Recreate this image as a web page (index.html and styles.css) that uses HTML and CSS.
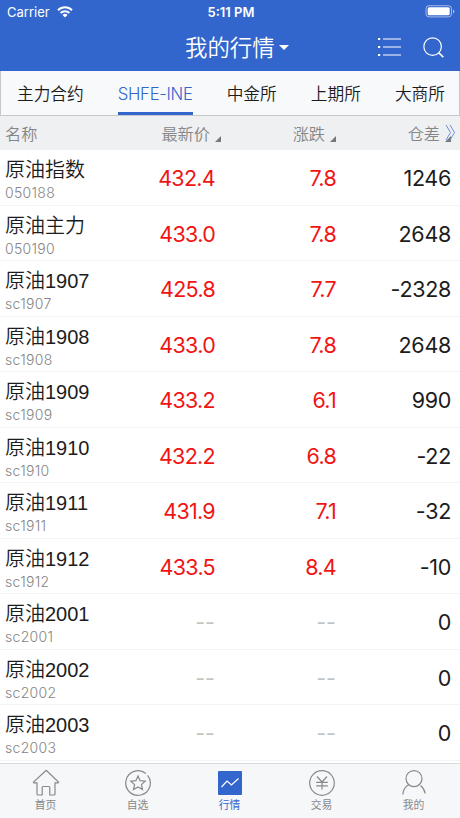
FILE: index.html
```html
<!DOCTYPE html>
<html lang="zh-CN">
<head>
    <meta charset="UTF-8">
    <meta name="viewport" content="width=device-width, initial-scale=1.0">
    <title>我的行情</title>
    <link rel="stylesheet" href="styles.css">
</head>
<body>
    <header class="header">
        <div class="status">
            <div class="carrier">
                <span>Carrier</span>
                <svg width="16" height="12" viewBox="0 0 16 12" fill="none" stroke="#fff" stroke-width="2">
                    <path d="M1 4.2a10 10 0 0 1 14 0M3.6 7a6.3 6.3 0 0 1 8.8 0"/>
                    <path d="M5.5 9a3.6 3.6 0 0 1 5 0L8 11.5z" fill="#fff" stroke="none"/>
                </svg>
            </div>
            <span class="time">5:11 PM</span>
            <svg class="battery" width="30" height="14" viewBox="0 0 30 14">
                <rect x="0" y=".7" width="25.5" height="11.2" rx="3" fill="none" stroke="#fff" stroke-opacity=".55"/>
                <rect x="1.7" y="2.3" width="22" height="8" rx="1.5" fill="#fff"/>
                <path d="M27 4.5v4q1.3-.7 1.3-2T27 4.5z" fill="#fff" fill-opacity=".6"/>
            </svg>
        </div>
        <div class="navbar">
            <h1 class="title">我的行情</h1>
            <div class="actions">
                <svg width="23" height="20" viewBox="0 0 23 20" stroke="#fff" stroke-width="1.2">
                    <path d="M5 2h18M5 10h18M5 18h18"/>
                    <path d="M0 2h2.2M0 10h2.2M0 18h2.2" stroke-width="2.2"/>
                </svg>
                <svg width="21" height="21" viewBox="0 0 21 21" fill="none" stroke="#fff" stroke-width="1.2">
                    <circle cx="9.6" cy="9.6" r="8.8"/>
                    <path d="M15.6 15.6l4.7 4.5" stroke-width="1.6"/>
                </svg>
            </div>
        </div>
    </header>

    <nav class="tabs">
        <a class="tab">主力合约</a>
        <a class="tab active">SHFE-INE</a>
        <a class="tab">中金所</a>
        <a class="tab">上期所</a>
        <a class="tab">大商所</a>
    </nav>

    <div class="columns">
        <span>名称</span>
        <span class="sort">最新价</span>
        <span class="sort">涨跌</span>
        <span class="sort">仓差</span>
        <svg class="more" width="11" height="17" viewBox="0 0 11 17" fill="none" stroke="#6c8dd9">
            <path d="M1 1l4.5 7.5L1 16M5 1l4.5 7.5L5 16"/>
        </svg>
    </div>

    <main class="list">
        <div class="row">
            <div class="name">原油指数<small>050188</small></div>
            <span class="up">432.4</span><span class="up">7.8</span><span>1246</span>
        </div>
        <div class="row">
            <div class="name">原油主力<small>050190</small></div>
            <span class="up">433.0</span><span class="up">7.8</span><span>2648</span>
        </div>
        <div class="row">
            <div class="name">原油1907<small>sc1907</small></div>
            <span class="up">425.8</span><span class="up">7.7</span><span>-2328</span>
        </div>
        <div class="row">
            <div class="name">原油1908<small>sc1908</small></div>
            <span class="up">433.0</span><span class="up">7.8</span><span>2648</span>
        </div>
        <div class="row">
            <div class="name">原油1909<small>sc1909</small></div>
            <span class="up">433.2</span><span class="up">6.1</span><span>990</span>
        </div>
        <div class="row">
            <div class="name">原油1910<small>sc1910</small></div>
            <span class="up">432.2</span><span class="up">6.8</span><span>-22</span>
        </div>
        <div class="row">
            <div class="name">原油1911<small>sc1911</small></div>
            <span class="up">431.9</span><span class="up">7.1</span><span>-32</span>
        </div>
        <div class="row">
            <div class="name">原油1912<small>sc1912</small></div>
            <span class="up">433.5</span><span class="up">8.4</span><span>-10</span>
        </div>
        <div class="row">
            <div class="name">原油2001<small>sc2001</small></div>
            <span class="none">--</span><span class="none">--</span><span>0</span>
        </div>
        <div class="row">
            <div class="name">原油2002<small>sc2002</small></div>
            <span class="none">--</span><span class="none">--</span><span>0</span>
        </div>
        <div class="row">
            <div class="name">原油2003<small>sc2003</small></div>
            <span class="none">--</span><span class="none">--</span><span>0</span>
        </div>
    </main>

    <footer class="tabbar">
        <a class="item">
            <svg class="icon" viewBox="0 0 28 28">
                <path d="M14 1.5L1.5 13q-.4.8.5.8h3V25q0 1 1 1h4.2v-7.5q0-1 1-1h5.6q1 0 1 1V26H22q1 0 1-1V13.8h3q.9 0 .5-.8L15 2q-.5-.8-1-.5z"/>
            </svg>
            首页
        </a>
        <a class="item">
            <svg class="icon" viewBox="0 0 28 28">
                <path d="M23.6 6.3A12.3 12.3 0 1 1 21.8 4.5"/>
                <path d="M14 7l2.1 4.7 5.1.5-3.8 3.4 1.1 5-4.5-2.6-4.5 2.6 1.1-5-3.8-3.4 5.1-.5z"/>
            </svg>
            自选
        </a>
        <a class="item active">
            <svg class="icon" viewBox="0 0 28 28">
                <rect x="2" y="2" width="24" height="24" rx="1" fill="#3366cc" stroke="none"/>
                <path d="M5.5 18l5.5-6 4.5 4 7-6.5" stroke="#fff"/>
            </svg>
            行情
        </a>
        <a class="item">
            <svg class="icon" viewBox="0 0 28 28">
                <circle cx="14" cy="14" r="12.3"/>
                <path d="M9 7.5l5 5.5 5-5.5M8.2 13.3h11.6M8.2 16.8h11.6M14 13v7.5"/>
            </svg>
            交易
        </a>
        <a class="item">
            <svg class="icon" viewBox="0 0 28 28">
                <circle cx="14" cy="9.6" r="8"/>
                <path d="M8.7 15.8Q3.5 18.5 2.8 25.5M20.5 16.5q3.8 3 4.700 8"/>
            </svg>
            我的
        </a>
    </footer>
</body>
</html>
```

FILE: styles.css
```css
* {
    box-sizing: border-box;
}
body {
    margin: 0;
    height: 818px;
    overflow: hidden;
    display: flex;
    flex-direction: column;
    font-family: Inter, "Noto Sans CJK SC", sans-serif;
    font-weight: 400;
    color: #1c1c1c;
    background-color: #fff;
}
.header {
    height: 71px;
    flex: none;
    color: #fff;
    background-color: #3366cc;
}
.status {
    height: 24px;
    padding: 0 4px 0 7px;
    display: grid;
    grid-template-columns: 1fr auto 1fr;
    align-items: center;
    font-size: 13px;
}
.carrier {
    display: flex;
    align-items: center;
    gap: 7px;
}
.time {
    font-weight: 600;
    margin-left: -1px;
}
.battery {
    justify-self: end;
    overflow: visible;
}
.navbar {
    height: 46px;
    padding: 0 16px 0 128px;
    display: grid;
    grid-template-columns: 1fr 112px;
    align-items: center;
}
.title {
    margin: -3px 0 0 57px;
    display: flex;
    align-items: center;
    gap: 4px;
    font-size: 22.4px;
    font-weight: 350;
}
.title::after {
    content: "";
    margin-top: 3px;
    border: 5px solid transparent;
    border-top-color: #fff;
    border-bottom: 0;
}
.actions {
    display: flex;
    justify-content: flex-end;
    align-items: center;
    gap: 22px;
}
.tabs {
    height: 45px;
    flex: none;
    padding: 0 14px 0 16px;
    display: flex;
    justify-content: space-between;
    font-size: 16.7px;
    font-weight: 350;
    line-height: 46px;
    background-color: #f8f9fb;
    border: 1px solid #c6c7c9;
    border-top: 0;
}
.tab.active {
    height: 44px;
    color: #3366cc;
    letter-spacing: -0.3px;
    border-bottom: 3px solid #3366cc;
}
.columns {
    height: 34px;
    flex: none;
    position: relative;
    display: grid;
    grid-template-columns: 112px 104px 115px 115px;
    align-items: center;
    padding-left: 5px;
    font-size: 16.2px;
    font-weight: 350;
    color: #858687;
    background-color: #eff0f2;
}
.sort {
    text-align: right;
}
.sort::after {
    content: "";
    display: inline-block;
    margin-left: 5px;
    border-left: 6px solid transparent;
    border-bottom: 6px solid #77787a;
    vertical-align: -2px;
}
.more {
    position: absolute;
    right: 4px;
    top: 8px;
}
.list {
    height: 613px;
    flex: none;
    overflow: hidden;
}
.row {
    height: 55.5px;
    padding: 2px 9px 0 5px;
    display: grid;
    grid-template-columns: 112px 98px 121px 115px;
    align-items: center;
    text-align: right;
    font-size: 21.5px;
    letter-spacing: -0.3px;
    border-bottom: 1px solid #f3f4f6;
}
.name {
    padding-top: 3px;
    text-align: left;
    font-family: "Liberation Sans", "Noto Sans CJK SC", sans-serif;
    font-size: 20px;
    font-weight: 350;
    line-height: 27px;
    letter-spacing: 0;
}
.name small {
    display: block;
    font-family: Inter, sans-serif;
    font-size: 14px;
    line-height: 18px;
    letter-spacing: 0.3px;
    color: #858585;
}
.up {
    color: #f01414;
    letter-spacing: -0.7px;
}
.none {
    color: #c4c4c4;
    letter-spacing: 0;
}
.tabbar {
    height: 55px;
    flex: none;
    display: grid;
    grid-template-columns: repeat(5, 1fr);
    background-color: #f6f7f9;
    border-top: 1px solid #d9dadc;
    font-size: 10.8px;
    line-height: 17px;
    text-align: center;
    color: #88898b;
}
.item {
    padding: 5px 1px 0 0;
    display: flex;
    flex-direction: column;
    align-items: center;
}
.item.active {
    color: #3366cc;
}
.icon {
    width: 28px;
    height: 28px;
    fill: none;
    stroke: #88898b;
    stroke-width: 1.2;
}
```
